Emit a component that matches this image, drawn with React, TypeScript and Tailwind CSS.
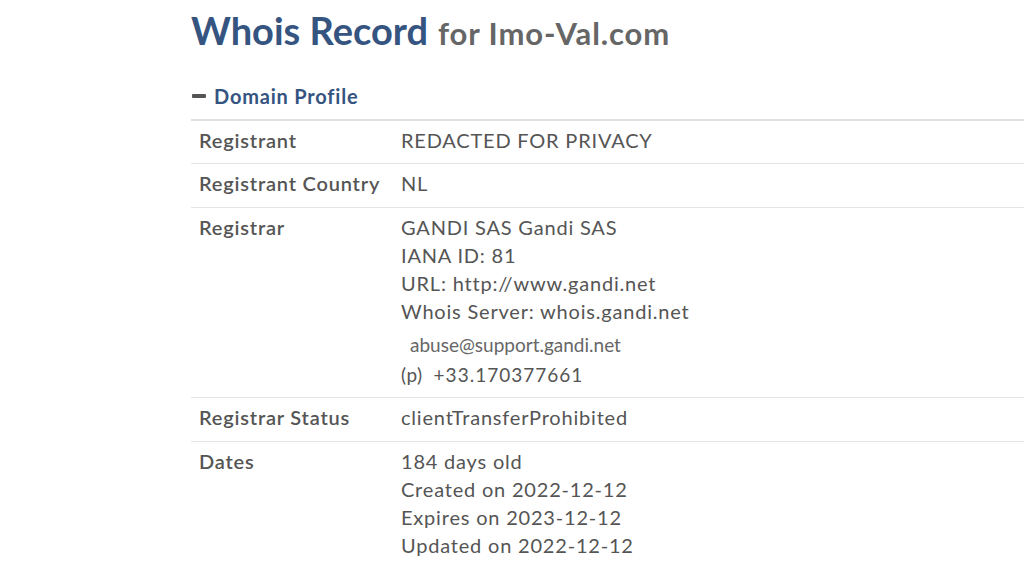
import React from "react";

const rows: { label: string; pb: string; values: React.ReactNode }[] = [
  { label: "Registrant", pb: "pb-[9px]", values: <div>REDACTED FOR PRIVACY</div> },
  { label: "Registrant Country", pb: "pb-[10px]", values: <div>NL</div> },
  {
    label: "Registrar",
    pb: "pb-[8px]",
    values: (
      <>
        <div>GANDI SAS Gandi SAS</div>
        <div>IANA ID: 81</div>
        <div>URL: http://www.gandi.net</div>
        <div>Whois Server: whois.gandi.net</div>
        <div className="mt-[4px] h-[31px] pl-[9px] text-[19px] leading-[31px] tracking-normal text-[#666]">
          abuse@support.gandi.net
        </div>
        <div className="h-[29px] text-[19px] leading-[29px] tracking-[1px] text-[#555]">
          <span className="tracking-[0.5px]">(p)</span>
          <span className="ml-[11px]">+33.170377661</span>
        </div>
      </>
    ),
  },
  { label: "Registrar Status", pb: "pb-[10px]", values: <div>clientTransferProhibited</div> },
  {
    label: "Dates",
    pb: "pb-[10px]",
    values: (
      <>
        <div>184 days old</div>
        <div>Created on 2022-12-12</div>
        <div>Expires on 2023-12-12</div>
        <div>Updated on 2022-12-12</div>
      </>
    ),
  },
];

export default function App() {
  return (
    <div className="h-[561px] w-[1024px] overflow-hidden bg-white font-['Lato','Noto_Sans',sans-serif] text-[#555]">
      <div className="ml-[191px] w-[900px] pt-[8px]">
        {/* Title */}
        <h1 className="flex h-[48px] items-baseline gap-[10px] leading-[44px]">
          <span className="text-[38px] font-bold text-[#35547f]">Whois Record</span>
          <span className="text-[31px] font-bold tracking-[0.9px] text-[#666]">for Imo-Val.com</span>
        </h1>

        {/* Section header */}
        <div className="mt-[28px] flex h-[24px] items-center gap-[8px] pl-[1px]">
          <span className="h-[4px] w-[14px] rounded-[1px] bg-[#555]" />
          <span className="text-[20px] font-bold tracking-[0.8px] text-[#35547f]">Domain Profile</span>
        </div>

        {/* Table */}
        <div className="mt-[11px] border-t-[2px] border-[#e0e0e0]">
          {rows.map((r, i) => (
            <div
              key={r.label}
              className={
                "flex pt-[5px] text-[20px] leading-[28px] tracking-[0.8px] " +
                r.pb +
                (i < rows.length - 1 ? " border-b border-[#e4e4e4]" : "")
              }
            >
              <div className="w-[210px] shrink-0 pl-[8px] font-semibold text-[#555]">{r.label}</div>
              <div className="text-[#555]">{r.values}</div>
            </div>
          ))}
        </div>
      </div>
    </div>
  );
}
